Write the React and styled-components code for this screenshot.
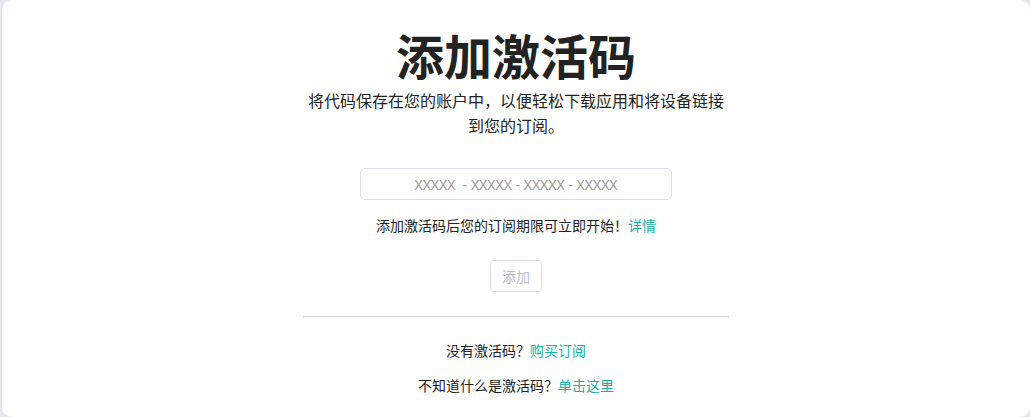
import React from "react";
import styled, { createGlobalStyle } from "styled-components";

const Global = createGlobalStyle`
  html, body { margin: 0; padding: 0; background: #e3e7ee; }
  body { font-family: "Noto Sans CJK SC", "Noto Sans", sans-serif; color: #222; }
  * { box-sizing: border-box; }
`;

const Card = styled.div`
  margin-left: 2px;
  height: 417px;
  background: #fff;
  border-radius: 10px;
  display: flex;
  justify-content: center;
  padding-top: 25px;
`;

const Column = styled.div`
  width: 426px;
  display: flex;
  flex-direction: column;
  align-items: center;
  text-align: center;
`;

const Title = styled.h1`
  margin: 0;
  font-size: 48px;
  line-height: 58px;
  font-weight: 700;
  color: #222;
`;

const Subtitle = styled.p`
  margin: 5px 0 0;
  width: 420px;
  font-size: 16px;
  line-height: 25px;
  color: #222;
`;

const CodeInput = styled.input`
  margin-top: 30px;
  width: 312px;
  height: 32px;
  border: 1px solid #dcdfe6;
  border-radius: 5px;
  text-align: center;
  font-family: "Noto Sans", "Noto Sans CJK SC", sans-serif;
  font-size: 14px;
  color: #333;
  outline: none;
  &::placeholder { color: #999; }
`;

const Line = styled.p`
  margin: ${(p) => p.$mt}px 0 0;
  font-size: 14px;
  line-height: 20px;
  color: #222;
`;

const Link = styled.a`
  color: #14b3a2;
  text-decoration: none;
  cursor: pointer;
`;

const AddButton = styled.button`
  margin-top: 25px;
  width: 52px;
  height: 32px;
  border: 1px solid #dcdfe6;
  border-radius: 4px;
  background: #fff;
  color: #b8bcc4;
  font-family: "Noto Sans CJK SC", sans-serif;
  font-size: 14px;
  padding: 0;
`;

const Divider = styled.hr`
  margin: 24px 0 0;
  width: 426px;
  border: none;
  border-top: 1px solid #d0d0d0;
`;

export default function App() {
  return (
    <>
      <Global />
      <Card>
        <Column>
          <Title>添加激活码</Title>
          <Subtitle>将代码保存在您的账户中，以便轻松下载应用和将设备链接到您的订阅。</Subtitle>
          <CodeInput placeholder="XXXXX  - XXXXX - XXXXX - XXXXX" />
          <Line $mt={15}>
            添加激活码后您的订阅期限可立即开始！<Link>详情</Link>
          </Line>
          <AddButton disabled>添加</AddButton>
          <Divider />
          <Line $mt={23}>
            没有激活码？<Link>购买订阅</Link>
          </Line>
          <Line $mt={15}>
            不知道什么是激活码？<Link>单击这里</Link>
          </Line>
        </Column>
      </Card>
    </>
  );
}
